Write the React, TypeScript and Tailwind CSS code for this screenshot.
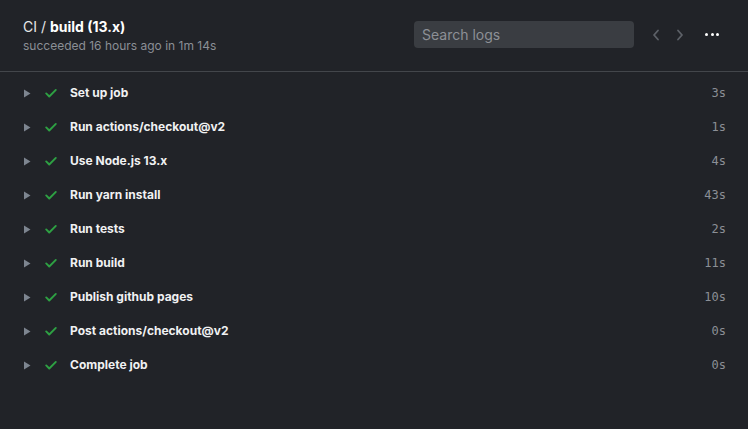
import React from 'react';

const steps = [
  { name: 'Set up job', time: '3s' },
  { name: 'Run actions/checkout@v2', time: '1s' },
  { name: 'Use Node.js 13.x', time: '4s' },
  { name: 'Run yarn install', time: '43s' },
  { name: 'Run tests', time: '2s' },
  { name: 'Run build', time: '11s' },
  { name: 'Publish github pages', time: '10s' },
  { name: 'Post actions/checkout@v2', time: '0s' },
  { name: 'Complete job', time: '0s' },
];

const Check = () => (
  <svg width="14" height="14" viewBox="0 0 16 16" className="text-[#2ea043]">
    <path d="M2.5 8.5 L6 12 L13.5 4.5" fill="none" stroke="currentColor" strokeWidth="2.2" strokeLinecap="round" strokeLinejoin="round" />
  </svg>
);

const Caret = () => (
  <svg width="8" height="9" viewBox="0 0 8 9" className="text-[#7d8590]">
    <path d="M1 0.5 L7.5 4.5 L1 8.5 Z" fill="currentColor" />
  </svg>
);

export default function App() {
  return (
    <div className="w-[748px] h-[429px] bg-[#212328] text-white font-['Inter','Liberation_Sans',sans-serif] overflow-hidden">
      {/* Header */}
      <div className="h-[72px] flex items-start justify-between pl-[23px] pr-[29px] border-b border-[#43464b]">
        <div className="pt-[17px]">
          <div className="text-[14px] leading-[20px] text-[#e6e7e9]">
            CI / <span className="font-bold text-white">build (13.x)</span>
          </div>
          <div className="text-[12px] leading-[16px] text-[#8b8f96] mt-[1px]">succeeded 16 hours ago in 1m 14s</div>
        </div>
        <div className="flex items-center pt-[21px]">
          <div className="w-[220px] h-[27px] rounded-[4px] bg-[#3a3d42] flex items-center px-[8px] text-[14px] text-[#8d9096]">
            Search logs
          </div>
          <div className="flex items-center gap-[16px] ml-[18px] text-[#5d6168]">
            <svg width="8" height="12" viewBox="0 0 8 12">
              <path d="M6 1.5 L2 6 L6 10.5" fill="none" stroke="currentColor" strokeWidth="1.8" strokeLinecap="round" strokeLinejoin="round" />
            </svg>
            <svg width="8" height="12" viewBox="0 0 8 12">
              <path d="M2 1.5 L6 6 L2 10.5" fill="none" stroke="currentColor" strokeWidth="1.8" strokeLinecap="round" strokeLinejoin="round" />
            </svg>
          </div>
          <div className="flex items-center gap-[2.5px] ml-[21px]">
            <span className="w-[3px] h-[3px] rounded-full bg-white" />
            <span className="w-[3px] h-[3px] rounded-full bg-white" />
            <span className="w-[3px] h-[3px] rounded-full bg-white" />
          </div>
        </div>
      </div>

      {/* Steps */}
      <div className="pt-[4px]">
        {steps.map((s) => (
          <div key={s.name} className="h-[34px] flex items-center pl-[23px] pr-[22px]">
            <Caret />
            <div className="ml-[13px]">
              <Check />
            </div>
            <span className="ml-[12px] text-[12px] font-bold text-[#f0f1f2]">{s.name}</span>
            <span className="ml-auto text-[12px] text-[#8b8f96] font-['DejaVu_Sans_Mono','Liberation_Mono',monospace]">{s.time}</span>
          </div>
        ))}
      </div>
    </div>
  );
}
